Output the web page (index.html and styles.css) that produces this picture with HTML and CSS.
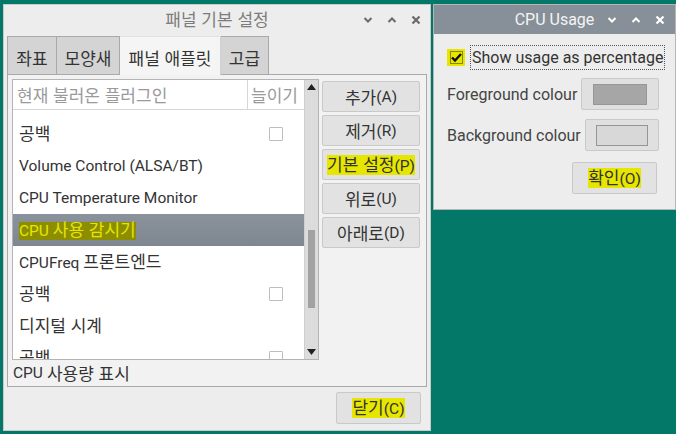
FILE: index.html
```html
<!DOCTYPE html>
<html lang="ko">
<head>
<meta charset="utf-8">
<title>패널 기본 설정</title>
<link rel="stylesheet" href="styles.css">
</head>
<body>
<div class="desk">
  <div class="dlg main">
    <div class="titlebar">
      <div></div>
      <div class="title"><span class="k">패널 기본 설정</span></div>
      <div class="wctl">
        <svg width="10" height="8" viewBox="0 0 10 8"><polyline points="1.5,2 5,5.5 8.5,2" fill="none" stroke="currentColor" stroke-width="2"/></svg>
        <svg width="10" height="8" viewBox="0 0 10 8"><polyline points="1.5,6 5,2.5 8.5,6" fill="none" stroke="currentColor" stroke-width="2"/></svg>
        <svg width="10" height="10" viewBox="0 0 10 10"><path d="M1.5 1.5 L8.5 8.5 M8.5 1.5 L1.5 8.5" stroke="currentColor" stroke-width="2.2"/></svg>
      </div>
    </div>
    <div class="tabs">
      <div class="tab t1"><span class="k">좌표</span></div>
      <div class="tab t2"><span class="k">모양새</span></div>
      <div class="tab t3 active"><span class="k">패널 애플릿</span></div>
      <div class="tab t4"><span class="k">고급</span></div>
    </div>
    <div class="panel">
      <div class="panel-top">
        <div class="list">
          <div class="tree">
            <div class="thead">
              <div class="hname"><span class="k">현재 불러온 플러그인</span></div>
              <div class="hexp"><span class="k">늘이기</span></div>
            </div>
            <div class="tbody">
              <div class="row first"><span class="nm"><span class="k">응용 프로그램 메뉴</span></span><span class="ex"></span></div>
              <div class="row"><span class="nm"><span class="k">공백</span></span><span class="ex"><span class="cb"></span></span></div>
              <div class="row"><span class="nm">Volume Control (ALSA/BT)</span><span class="ex"></span></div>
              <div class="row"><span class="nm">CPU Temperature Monitor</span><span class="ex"></span></div>
              <div class="row sel"><span class="nm"><mark class="hl">CPU <span class="k">사용 감시기</span></mark></span><span class="ex"></span></div>
              <div class="row"><span class="nm">CPUFreq <span class="k">프론트엔드</span></span><span class="ex"></span></div>
              <div class="row"><span class="nm"><span class="k">공백</span></span><span class="ex"><span class="cb"></span></span></div>
              <div class="row"><span class="nm"><span class="k">디지털 시계</span></span><span class="ex"></span></div>
              <div class="row"><span class="nm"><span class="k">공백</span></span><span class="ex"><span class="cb"></span></span></div>
            </div>
          </div>
          <div class="sbar">
            <svg class="arr" width="9" height="6" viewBox="0 0 9 6"><polygon points="0,6 4.5,0 9,6" fill="#222"/></svg>
            <div class="strack"><div class="thumb"></div></div>
            <svg class="arr" width="9" height="6" viewBox="0 0 9 6"><polygon points="0,0 4.5,6 9,0" fill="#222"/></svg>
          </div>
        </div>
        <div class="btns">
          <button class="btn"><span class="k">추가</span>(A)</button>
          <button class="btn"><span class="k">제거</span>(R)</button>
          <button class="btn"><mark class="hl"><span class="k">기본 설정</span>(P)</mark></button>
          <button class="btn"><span class="k">위로</span>(U)</button>
          <button class="btn"><span class="k">아래로</span>(D)</button>
        </div>
      </div>
      <div class="status">CPU <span class="k">사용량 표시</span></div>
    </div>
    <div class="footer">
      <button class="btn close"><mark class="hl"><span class="k">닫기</span>(C)</mark></button>
    </div>
  </div>

  <div class="dlg cpu">
    <div class="titlebar dark">
      <div></div>
      <div class="title">CPU Usage</div>
      <div class="wctl light">
        <svg width="10" height="8" viewBox="0 0 10 8"><polyline points="1.5,2 5,5.5 8.5,2" fill="none" stroke="currentColor" stroke-width="2"/></svg>
        <svg width="10" height="8" viewBox="0 0 10 8"><polyline points="1.5,6 5,2.5 8.5,6" fill="none" stroke="currentColor" stroke-width="2"/></svg>
        <svg width="10" height="10" viewBox="0 0 10 10"><path d="M1.5 1.5 L8.5 8.5 M8.5 1.5 L1.5 8.5" stroke="currentColor" stroke-width="2.2"/></svg>
      </div>
    </div>
    <div class="cpu-body">
      <div class="chkrow">
        <span class="chk-hl"><span class="chk"><svg width="13" height="13" viewBox="0 0 13 13"><polyline points="2,6.5 5,9.5 11,3" fill="none" stroke="#111" stroke-width="2.4"/></svg></span></span>
        <span class="focus">Show usage as percentage</span>
      </div>
      <div class="crow">
        <span>Foreground colour</span>
        <button class="btn swbtn fg"><span class="sw fgsw"></span></button>
      </div>
      <div class="crow">
        <span>Background colour</span>
        <button class="btn swbtn bg"><span class="sw bgsw"></span></button>
      </div>
      <div class="okrow">
        <button class="btn ok"><mark class="hl"><span class="k">확인</span>(O)</mark></button>
      </div>
    </div>
  </div>
</div>
</body>
</html>
```

FILE: styles.css
```css
html, body {
  margin: 0;
  padding: 0;
}
body {
  background: #037868;
  width: 676px;
  height: 434px;
  overflow: hidden;
  font-family: "Roboto", "Noto Sans CJK KR", sans-serif;
  font-size: 15.5px;
  color: #3a3a3a;
}
.k {
  font-family: "Noto Sans CJK KR", sans-serif;
  font-size: 17px;
  line-height: 1;
}
.desk {
  display: flex;
  align-items: flex-start;
  padding: 4px 0 0 3px;
  gap: 2px;
}
.dlg {
  box-sizing: border-box;
  background: #ededed;
  border: 1px solid #c9c9c9;
  display: flex;
  flex-direction: column;
}
.main {
  width: 428px;
  height: 427px;
}
.cpu {
  width: 243px;
  height: 206px;
  border-color: #b5b5b5;
}
.titlebar {
  height: 30px;
  display: grid;
  grid-template-columns: 1fr auto 1fr;
  align-items: center;
  flex: none;
}
.titlebar .title {
  color: #7c7c7c;
  font-size: 15px;
}
.titlebar.dark {
  background: #878f98;
  height: 29px;
}
.titlebar.dark .title {
  color: #f4f4f4;
  font-size: 16px;
}
.wctl {
  display: flex;
  justify-content: flex-end;
  align-items: center;
  gap: 14px;
  padding-right: 9px;
  color: #6a6a6a;
}
.wctl.light {
  color: #ffffff;
  gap: 14px;
  padding-right: 10px;
}
.tabs {
  display: flex;
  padding-left: 3px;
  margin-top: 1px;
  height: 38px;
  flex: none;
}
.tab {
  box-sizing: border-box;
  height: 38px;
  background: #d4d4d4;
  border: 1px solid #a9a9a9;
  border-bottom: none;
  display: flex;
  align-items: center;
  justify-content: center;
  color: #333;
  padding-top: 3px;
}
.tab + .tab { border-left: none; }
.t1 { width: 50px; }
.t2 { width: 63px; }
.t3 { width: 101px; }
.t4 { width: 48px; }
.tab.active {
  background: #f5f5f5;
  border-color: #d0d0d0;
  border-top: 1px solid #e2e2e2;
  position: relative;
  z-index: 1;
  margin-bottom: -1px;
  height: 39px;
}
.panel {
  box-sizing: border-box;
  margin-left: 3px;
  width: 420px;
  height: 313px;
  background: #f2f2f2;
  border: 1px solid #a9a9a9;
  padding: 4px 6px 0 4px;
  display: flex;
  flex-direction: column;
}
.panel-top {
  display: flex;
  gap: 3px;
}
.list {
  box-sizing: border-box;
  width: 307px;
  height: 281px;
  border: 1px solid #b4b4b4;
  background: #ffffff;
  display: flex;
}
.tree {
  flex: 1;
  display: flex;
  flex-direction: column;
  overflow: hidden;
}
.thead {
  height: 29px;
  flex: none;
  display: flex;
  border-bottom: 1px solid #d6d6d6;
  color: #9a9a9a;
  background: #fff;
  position: relative;
  z-index: 1;
}
.hname {
  width: 235px;
  padding-left: 4px;
  display: flex;
  align-items: center;
  border-right: 1px solid #d6d6d6;
  box-sizing: border-box;
}
.hexp {
  flex: 1;
  padding-left: 3px;
  display: flex;
  align-items: center;
}
.tbody {
  flex: 1;
  overflow: hidden;
}
.row {
  height: 32px;
  display: flex;
  align-items: center;
}
.row.first { margin-top: -24px; }
.nm {
  width: 235px;
  padding-left: 6px;
  box-sizing: border-box;
  white-space: nowrap;
  color: #333;
}
.ex {
  flex: 1;
  display: flex;
  justify-content: center;
}
.cb {
  width: 12px;
  height: 12px;
  border: 1px solid #bdbdbd;
  background: #fff;
  border-radius: 1px;
}
.row.sel {
  background: linear-gradient(#8a939c, #7e8790);
}
.row.sel .hl {
  background: #8d8d00;
  color: #e6e600;
}
.sbar {
  width: 14px;
  flex: none;
  background: #dcdcdc;
  border-left: 1px solid #cfcfcf;
  display: flex;
  flex-direction: column;
  align-items: center;
  padding: 4px 0 4px;
  box-sizing: border-box;
}
.arr { flex: none; }
.strack {
  flex: 1;
  width: 100%;
  display: flex;
  flex-direction: column;
  align-items: center;
  padding-top: 140px;
}
.thumb {
  width: 7px;
  height: 78px;
  background: #a2a2a2;
}
.btns {
  display: flex;
  flex-direction: column;
  gap: 3px;
  padding-top: 2px;
}
.btn {
  box-sizing: border-box;
  font-family: "Roboto", "Noto Sans CJK KR", sans-serif;
  font-size: 15.5px;
  color: #333;
  background: #e2e2e2;
  border: 1px solid #c9c9c9;
  border-radius: 2px;
  padding: 0;
  display: flex;
  align-items: center;
  justify-content: center;
}
.btns .btn {
  width: 98px;
  height: 31px;
}
.hl {
  background: #e6e600;
  color: #333;
  padding: 0;
}
.status {
  height: 25px;
  display: flex;
  align-items: center;
  gap: 4px;
  color: #333;
  margin-left: 1px;
}
.footer {
  display: flex;
  justify-content: flex-end;
  padding: 5px 9px 0 0;
}
.btn.close {
  width: 85px;
  height: 32px;
}
.cpu-body {
  flex: 1;
  padding: 11px 16px 0 13px;
  display: flex;
  flex-direction: column;
  color: #444;
}
.chkrow {
  display: flex;
  align-items: center;
  height: 25px;
  gap: 5px;
}
.chk-hl {
  width: 18px;
  height: 17px;
  flex: none;
  background: #e6e600;
  display: flex;
  align-items: center;
  justify-content: center;
}
.chk {
  width: 13px;
  height: 13px;
  border: 1px solid #888800;
  box-sizing: border-box;
  display: flex;
}
.chk svg { margin: -1px; }
.focus {
  border: 1px dotted #555;
  padding: 2px 1px;
  font-size: 16px;
  color: #333;
  white-space: nowrap;
  line-height: 19px;
}
.crow {
  display: flex;
  align-items: center;
  justify-content: space-between;
  margin-top: 8px;
  font-size: 16px;
}
.crow + .crow { margin-top: 9px; }
.swbtn {
  height: 32px;
  background: #e0e0e0;
}
.swbtn.fg { width: 78px; }
.swbtn.bg { width: 74px; }
.sw {
  display: block;
  height: 21px;
  border: 1px solid #959595;
  box-sizing: border-box;
}
.fgsw { width: 54px; background: #a6a6a6; }
.bgsw { width: 52px; background: #d8d8d8; }
.okrow {
  display: flex;
  justify-content: flex-end;
  margin-top: 11px;
  padding-right: 2px;
}
.btn.ok {
  width: 85px;
  height: 32px;
}
```
